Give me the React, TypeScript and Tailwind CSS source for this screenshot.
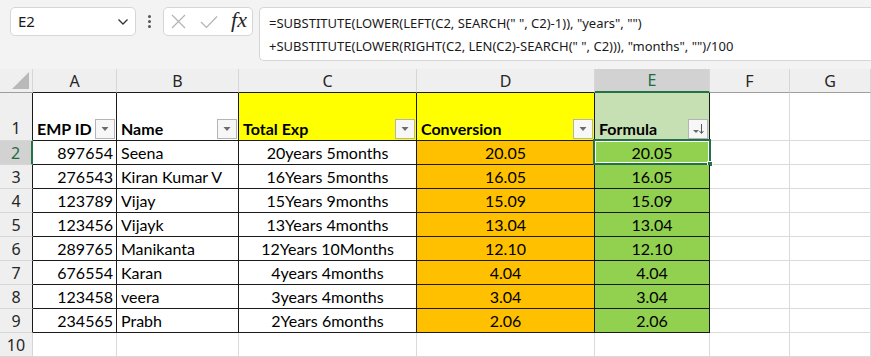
import React from "react";

const cols = [
  { key: "corner", w: 33 },
  { key: "A", w: 84 },
  { key: "B", w: 122 },
  { key: "C", w: 178 },
  { key: "D", w: 178 },
  { key: "E", w: 115 },
  { key: "F", w: 80 },
  { key: "G", w: 81 },
];

const data = [
  ["897654", "Seena", "20years 5months", "20.05", "20.05"],
  ["276543", "Kiran Kumar V", "16Years 5months", "16.05", "16.05"],
  ["123789", "Vijay", "15Years 9months", "15.09", "15.09"],
  ["123456", "Vijayk", "13Years 4months", "13.04", "13.04"],
  ["289765", "Manikanta", "12Years 10Months", "12.10", "12.10"],
  ["676554", "Karan", "4years 4months", "4.04", "4.04"],
  ["123458", "veera", "3years 4months", "3.04", "3.04"],
  ["234565", "Prabh", "2Years 6months", "2.06", "2.06"],
];

const cellFont = { fontFamily: "Lato, 'Liberation Sans', sans-serif" };
const uiFont = { fontFamily: "'Noto Sans', 'Open Sans', 'Liberation Sans', sans-serif" };

function FilterBtn({ sort }: { sort?: boolean }) {
  return (
    <div className="w-[20px] h-[20px] mb-[1px] mr-[1px] shrink-0 border border-[#b4b4b4] bg-[#f7f7f7] flex items-center justify-center">
      {sort ? (
        <svg width="16" height="16" viewBox="0 0 16 16">
          <path d="M3 9 L9 9 L6 12 Z" fill="#6b6b6b" />
          <path d="M11.5 3 V12" stroke="#555" strokeWidth="1" />
          <path d="M9.5 10 L11.5 12.5 L13.5 10" stroke="#555" strokeWidth="1" fill="none" />
        </svg>
      ) : (
        <svg width="10" height="6" viewBox="0 0 10 6">
          <path d="M1.5 1 L8.5 1 L5 5 Z" fill="#6b6b6b" />
        </svg>
      )}
    </div>
  );
}

export default function App() {
  return (
    <div className="w-[871px] h-[357px] overflow-hidden bg-white">
      {/* Top toolbar */}
      <div className="h-[69px] bg-[#f3f3f3] flex items-start pt-[7px] pl-[10px] gap-0">
        <div
          className="w-[126px] h-[29px] bg-white border border-[#d6d6d6] rounded-[5px] flex items-center justify-between pl-[7px] pr-[6px] text-[15px] text-[#1a1a1a]"
          style={uiFont}
        >
          <span>E2</span>
          <svg width="12" height="8" viewBox="0 0 12 8">
            <path d="M1.5 1.5 L6 6 L10.5 1.5" stroke="#333" strokeWidth="1.3" fill="none" />
          </svg>
        </div>
        <div className="w-[27px] h-[29px] flex flex-col items-center justify-center gap-[2px]">
          <div className="w-[3px] h-[3px] bg-[#555] rounded-full" />
          <div className="w-[3px] h-[3px] bg-[#555] rounded-full" />
          <div className="w-[3px] h-[3px] bg-[#555] rounded-full" />
        </div>
        <div className="w-[90px] h-[29px] bg-white border border-[#d6d6d6] rounded-[5px] flex items-center pl-[7px] pr-[5px] justify-between">
          <svg width="15" height="15" viewBox="0 0 15 15">
            <path d="M1 1 L14 14 M14 1 L1 14" stroke="#b3b3b3" strokeWidth="1.2" />
          </svg>
          <svg width="18" height="14" viewBox="0 0 18 14">
            <path d="M1 7 L6.5 12.5 L17 1.5" stroke="#b3b3b3" strokeWidth="1.2" fill="none" />
          </svg>
          <span
            className="text-[22px] italic text-[#262626] leading-none pb-[3px]"
            style={{ fontFamily: "'Liberation Serif', 'DejaVu Serif', serif" }}
          >
            fx
          </span>
        </div>
        <div
          className="ml-[6px] flex-1 h-[54px] bg-white border border-[#d6d6d6] rounded-l-[5px] border-r-0 pl-[9px] pt-[4px] text-[13px] leading-[23px] text-[#1a1a1a] whitespace-nowrap"
          style={uiFont}
        >
          <div>=SUBSTITUTE(LOWER(LEFT(C2, SEARCH(" ", C2)-1)), "years", "")</div>
          <div>+SUBSTITUTE(LOWER(RIGHT(C2, LEN(C2)-SEARCH(" ", C2))), "months", "")/100</div>
        </div>
      </div>

      {/* Grid */}
      <div className="grid grid-cols-[33px_84px_122px_178px_178px_115px_80px_81px] grid-rows-[24px_48px_repeat(9,24px)]">
        {/* Column header row */}
        <div className="bg-[#efefef] border-r border-b border-r-[#d6d6d6] border-b-[#9e9e9e] relative">
          <svg className="absolute right-[3px] bottom-[3px]" width="17" height="17" viewBox="0 0 17 17">
            <path d="M17 0 L17 17 L0 17 Z" fill="#b9b9b9" />
          </svg>
        </div>
        {cols.slice(1).map((c) => {
          const sel = c.key === "E";
          const inTable = ["A", "B", "C", "D"].includes(c.key);
          return (
            <div
              key={c.key}
              className={
                "flex items-center justify-center text-[16px] border-r border-r-[#d6d6d6] " +
                (sel
                  ? "bg-[#d2d2d2] text-[#1e6b41] border-b-2 border-b-[#217346]"
                  : inTable
                  ? "bg-[#efefef] text-[#262626] border-b border-b-[#1a1a1a]"
                  : "bg-[#efefef] text-[#262626] border-b border-b-[#9e9e9e]")
              }
              style={uiFont}
            >
              {c.key}
            </div>
          );
        })}

        {/* Row 1 */}
        <div
          className="bg-[#efefef] border-b border-b-[#d6d6d6] border-r border-r-[#1a1a1a] flex items-end justify-center text-[16px] text-[#262626] leading-[24px]"
          style={uiFont}
        >
          1
        </div>
        {[
          { t: "EMP ID", bg: "bg-white" },
          { t: "Name", bg: "bg-white" },
          { t: "Total Exp", bg: "bg-[#ffff00]" },
          { t: "Conversion", bg: "bg-[#ffff00]" },
          { t: "Formula", bg: "bg-[#c6e0b4]", sort: true },
        ].map((h) => (
          <div
            key={h.t}
            className={
              h.bg +
              " border-r border-b border-[#1a1a1a] flex items-end justify-between pl-[4px] text-[16px] font-bold text-black leading-[22px]"
            }
            style={cellFont}
          >
            <span>{h.t}</span>
            <FilterBtn sort={h.sort} />
          </div>
        ))}
        <div className="border-r border-b border-[#dadada]" />
        <div className="border-r border-b border-[#dadada]" />

        {/* Data rows */}
        {data.map((r, i) => {
          const rowNum = i + 2;
          const sel = rowNum === 2;
          return (
            <React.Fragment key={rowNum}>
              <div
                className={
                  "flex items-center justify-center text-[16px] border-b border-b-[#d6d6d6] " +
                  (sel
                    ? "bg-[#d2d2d2] text-[#1e6b41] border-r-2 border-r-[#217346]"
                    : "bg-[#efefef] text-[#262626] border-r border-r-[#1a1a1a]")
                }
                style={uiFont}
              >
                {rowNum}
              </div>
              <div
                className="bg-white border-r border-b border-[#1a1a1a] flex items-end justify-end pr-[3px] text-[16px] text-black leading-[22px]"
                style={cellFont}
              >
                {r[0]}
              </div>
              <div
                className="bg-white border-r border-b border-[#1a1a1a] flex items-end pl-[4px] text-[16px] text-black leading-[22px] whitespace-nowrap"
                style={cellFont}
              >
                {r[1]}
              </div>
              <div
                className="bg-white border-r border-b border-[#1a1a1a] flex items-end justify-center text-[16px] text-black leading-[22px]"
                style={cellFont}
              >
                {r[2]}
              </div>
              <div
                className="bg-[#ffc000] border-r border-b border-[#1a1a1a] flex items-end justify-center text-[16px] text-black leading-[22px]"
                style={cellFont}
              >
                {r[3]}
              </div>
              <div
                className="bg-[#92d050] border-r border-b border-[#1a1a1a] flex items-end justify-center text-[16px] text-black leading-[22px] relative"
                style={cellFont}
              >
                {r[4]}
                {sel && (
                  <div className="absolute left-[-2px] top-[-2px] right-[-2px] bottom-[-1px] border-2 border-[#217346] pointer-events-none">
                    <div className="w-full h-full border border-white" />
                    <div className="absolute right-[-4px] bottom-[-4px] w-[6px] h-[6px] bg-[#217346] border border-white" />
                  </div>
                )}
              </div>
              <div className="border-r border-b border-[#dadada]" />
              <div className="border-r border-b border-[#dadada]" />
            </React.Fragment>
          );
        })}

        {/* Row 10 */}
        <div
          className="bg-[#efefef] border-r border-b border-r-[#d6d6d6] border-b-[#d6d6d6] flex items-center justify-center text-[16px] text-[#262626]"
          style={uiFont}
        >
          10
        </div>
        {cols.slice(1).map((c) => (
          <div key={"r10" + c.key} className="border-r border-b border-[#dadada]" />
        ))}
      </div>
    </div>
  );
}
